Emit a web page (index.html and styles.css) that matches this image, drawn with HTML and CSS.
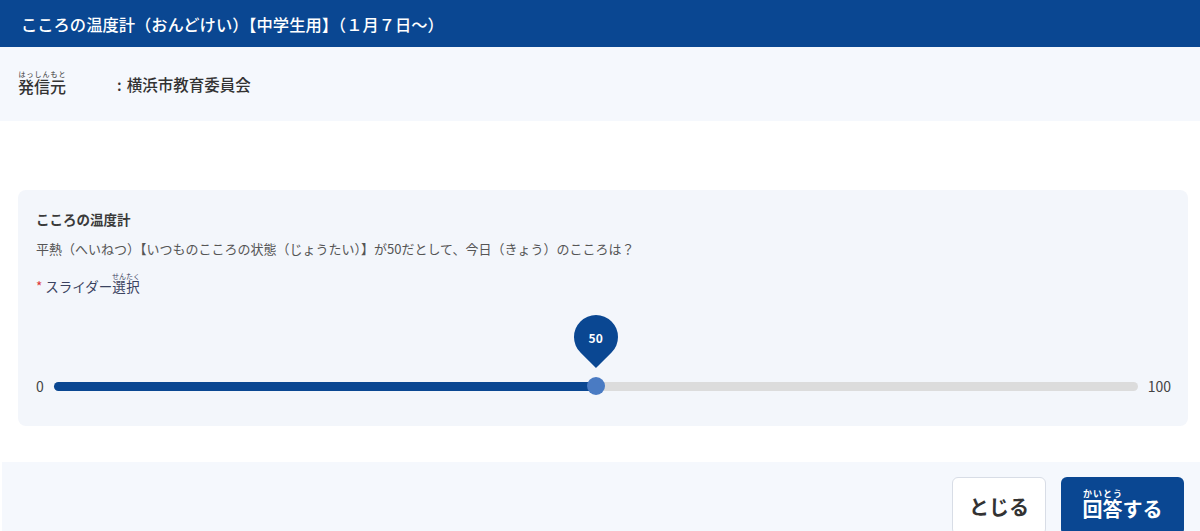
FILE: index.html
```html
<!DOCTYPE html>
<html lang="ja">
<head>
    <meta charset="UTF-8">
    <meta name="viewport" content="width=device-width, initial-scale=1.0">
    <title>こころの温度計</title>
    <link rel="stylesheet" href="styles.css">
</head>
<body>
    <header class="topbar">
        <h1>こころの温度計（おんどけい）【中学生用】（１月７日～）</h1>
    </header>

    <section class="sender">
        <span class="sender-label"><ruby>発信元<rt>はっしんもと</rt></ruby></span>
        <span class="sender-name"><span class="colon">:</span>横浜市教育委員会</span>
    </section>

    <main class="content">
        <div class="card">
            <h2 class="card-title">こころの温度計</h2>
            <p class="question">平熱（へいねつ）【いつものこころの状態（じょうたい）】が50だとして、今日（きょう）のこころは？</p>
            <p class="field-label"><span class="required">*</span> スライダー<ruby>選択<rt>せんたく</rt></ruby></p>

            <div class="slider-row">
                <span class="slider-min">0</span>
                <div class="track">
                    <div class="track-fill" style="width: 50%"></div>
                    <div class="thumb" style="left: 50%">
                        <div class="pin"><span>50</span></div>
                    </div>
                </div>
                <span class="slider-max">100</span>
            </div>
        </div>
    </main>

    <footer class="actions">
        <button class="btn btn-close">とじる</button>
        <button class="btn btn-submit"><ruby>回答<rt>かいとう</rt></ruby>する</button>
    </footer>
</body>
</html>
```

FILE: styles.css
```css
body {
    margin: 0;
    font-family: "Noto Sans CJK JP", "Noto Sans", sans-serif;
    color: #333;
    background: #fff;
    height: 531px;
    overflow: hidden;
}
.topbar {
    background: #0a4792;
    height: 47px;
    display: flex;
    align-items: center;
    padding: 0 21px;
}
.topbar h1 {
    margin: 0;
    color: #fff;
    font-size: 16.3px;
    font-weight: 500;
}
.sender {
    background: #f5f8fd;
    height: 74px;
    display: flex;
    align-items: center;
    padding: 0 18px;
}
.sender-label {
    width: 99px;
    font-size: 16px;
    font-weight: 500;
}
.sender-label rt {
    font-size: 7px;
    color: #555;
}
.sender-name {
    font-size: 15.5px;
    font-weight: 500;
}
.colon {
    margin-right: 5px;
}
.content {
    padding: 69px 12px 36px 18px;
}
.card {
    background: #f3f6fb;
    border-radius: 8px;
    height: 236px;
    box-sizing: border-box;
    padding: 18px 17px 0 18px;
}
.card-title {
    margin: 0;
    font-size: 13.5px;
    font-weight: 700;
    line-height: 22px;
    color: #3a3a3a;
}
.question {
    margin: 8px 0 0;
    font-size: 13px;
    line-height: 22px;
    color: #555;
}
.field-label {
    margin: 12px 0 0;
    font-size: 13.5px;
    line-height: 26px;
    color: #3a4260;
}
.field-label rt {
    font-size: 7px;
}
.required {
    color: #d33;
}
.slider-row {
    margin-top: 77px;
    display: flex;
    align-items: center;
    gap: 10px;
    font-size: 14px;
    color: #444;
}
.track {
    flex: 1;
    position: relative;
    height: 9px;
    border-radius: 5px;
    background: #dcdcdc;
}
.track-fill {
    height: 100%;
    border-radius: 5px;
    background: #0a4792;
}
.thumb {
    position: absolute;
    top: 50%;
    width: 18px;
    height: 18px;
    margin: -9px 0 0 -9px;
    border-radius: 50%;
    background: #4a7bc3;
}
.pin {
    position: absolute;
    left: 50%;
    bottom: 36px;
    width: 44px;
    height: 44px;
    margin-left: -22px;
    background: #0a4792;
    border-radius: 50% 50% 0 50%;
    transform: rotate(45deg);
    display: flex;
    align-items: center;
    justify-content: center;
}
.pin span {
    transform: rotate(-45deg);
    color: #fff;
    font-size: 12px;
    font-weight: 700;
}
.actions {
    background: #f5f8fd;
    height: 69px;
    margin-left: 2px;
    display: flex;
    justify-content: flex-end;
    align-items: flex-start;
    gap: 15px;
    padding: 15px 16px 0 0;
    box-sizing: border-box;
}
.btn {
    font-family: inherit;
    font-size: 20px;
    font-weight: 700;
    height: 58px;
    border-radius: 6px;
    cursor: pointer;
}
.btn-close {
    width: 94px;
    background: #fff;
    color: #333;
    border: 1px solid #d8dde6;
}
.btn-submit {
    width: 123px;
    background: #0a4792;
    color: #fff;
    border: none;
}
.btn rt {
    font-size: 9px;
}
```
